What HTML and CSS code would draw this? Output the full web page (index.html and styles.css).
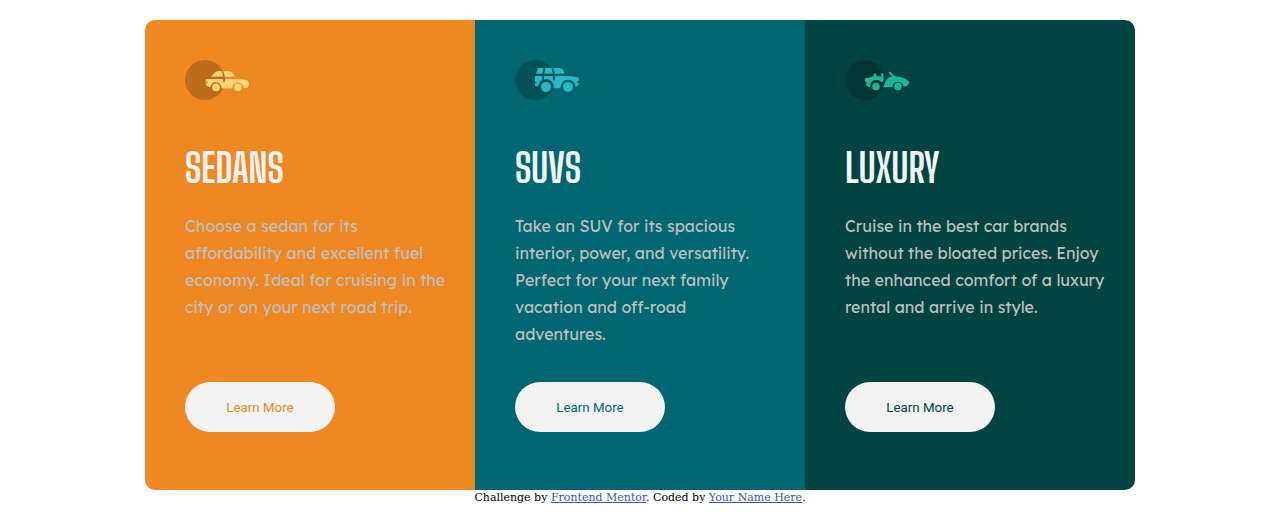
FILE: index.html
```html
<!DOCTYPE html>
<html lang="en">
<head>
<meta charset="utf-8">
<title>3-column preview card</title>
<link rel="stylesheet" href="styles.css">
</head>
<body>
<main class="cards">
  <section class="card sedans">
    <svg class="icon" width="64" height="40" viewBox="0 0 64 40"><circle cx="20" cy="20" r="20" opacity=".2"/><g fill="#ffd473"><path d="M26.3 16.8C29 13 31 11 34.8 11H36.4q1.3 2.6 1.6 5.8zM38.2 11H43c3.5 0 5.4 2 6.5 5.8H39.9q-.3-3-1.7-5.8z"/><path d="M20.8 18.9h17.4q.1 2-.2 3.4h2q.3-1.4.2-3.4H51c6 0 12.8.2 13 4.2 0 2.3-.8 4.1-2 5h-3.4a5.6 5.6 0 1 0-11.2.2H36.6A5.6 5.6 0 1 0 25.4 27.2l-3.6-1.2-1.3-2.6 3-.7-3-1.2z"/><circle cx="31" cy="27.4" r="3.8"/><circle cx="53" cy="27.4" r="3.8"/></g></svg>
    <h2 class="title">SEDANS</h2>
    <p class="text">Choose a sedan for its affordability and excellent fuel economy. Ideal for cruising in the city or on your next road trip.</p>
    <button class="button">Learn More</button>
  </section>
  <section class="card suvs">
    <svg class="icon" width="64" height="40" viewBox="0 0 64 40"><circle cx="20" cy="20" r="20" opacity=".2"/><g fill="#2bb7c3"><path d="M22.8 8h5.7l-1 5.7h-6.4zM30.3 8h6.2l1.3 5.7h-8.6zM38.6 8H45c2.4 0 3.8 2.8 4.3 5.7h-9.4z"/><path d="M20 15.9h7.2v4.2A7.5 7.5 0 0 0 23.4 25l-.6 1.2H20v-3h1.5v-1.5H20zM29 15.9h8.9v4.3h1.8v-4.3h12.1c6 .3 11.4.6 12 2.4v2.8H62v1.7h2l-1 3.4h-2.6A7.4 7.4 0 0 0 45.9 25.4l-.5 2.9h-6.7A7.6 7.6 0 0 0 29 19.5z"/><circle cx="31" cy="27" r="5"/><circle cx="53" cy="27" r="5"/></g></svg>
    <h2 class="title">SUVS</h2>
    <p class="text">Take an SUV for its spacious interior, power, and versatility. Perfect for your next family vacation and off-road adventures.</p>
    <button class="button">Learn More</button>
  </section>
  <section class="card luxury">
    <svg class="icon" width="64" height="40" viewBox="0 0 64 40"><circle cx="20" cy="20" r="20" opacity=".2"/><g fill="#1db897"><path d="M20 18.2c3.5 0 6.2-.7 8.6-2.1l.4-2.6 1.6-.3 1.2 2.9 4.7.3-.4-3 1.7-.3c1.5 3 1.3 6.5-.8 9.7A6.6 6.6 0 0 0 25.2 25l-.3 2.4c-2.5-.7-4-1.7-4-4.2h1.6l-2.5-2z"/><path d="M43.2 12.7l1.6-1.3 5 4.8c6.6.4 13.2 2.8 14.2 5.8.2 2-1.2 3.7-3.8 4.5h-1.5a5.8 5.8 0 0 0-11.5.8H37.5c2.2-2.7 2.8-6.2 5-8.6 1.3-1.4 3-2 4.6-2.2z"/><circle cx="31" cy="26.5" r="3.8"/><circle cx="53" cy="26.5" r="3.8"/></g></svg>
    <h2 class="title">LUXURY</h2>
    <p class="text">Cruise in the best car brands without the bloated prices. Enjoy the enhanced comfort of a luxury rental and arrive in style.</p>
    <button class="button">Learn More</button>
  </section>
</main>
<footer class="attribution">Challenge by <a class="link" href="#">Frontend Mentor</a>. Coded by <a class="link" href="#">Your Name Here</a>.</footer>
</body>
</html>
```
FILE: styles.css
```css
body { margin: 0; padding-top: 20px; background: #fff; }
.cards { display: flex; width: 990px; height: 470px; margin: 0 auto; border-radius: 10px; overflow: hidden; }
.card { box-sizing: border-box; width: 330px; padding: 40px 25px 58px 40px; display: flex; flex-direction: column; align-items: flex-start; }
.sedans { background: #ee8822; color: #ee8822; }
.suvs { background: #006770; color: #006770; }
.luxury { background: #004442; color: #004442; }
.icon { display: block; flex: none; color: #000; }
.title { margin: 44px 0 0; height: 48px; font: 700 40px/48px "Big Shoulders Display", sans-serif; color: #f2f2f2; }
.text { margin: 21px 0 0; font: 400 16px/27px "Lexend Deca", sans-serif; color: #bfbfbf; }
.button { margin: auto 0 0; width: 150px; height: 50px; border: 0; border-radius: 25px; background: #f2f2f2; color: inherit; font: 400 13.3333px Roboto, sans-serif; padding: 0; }
.attribution { padding-top: 1px; font: 11px/14px "DejaVu Serif", serif; text-align: center; color: #000; }
.link { color: #3e52a3; }
```
